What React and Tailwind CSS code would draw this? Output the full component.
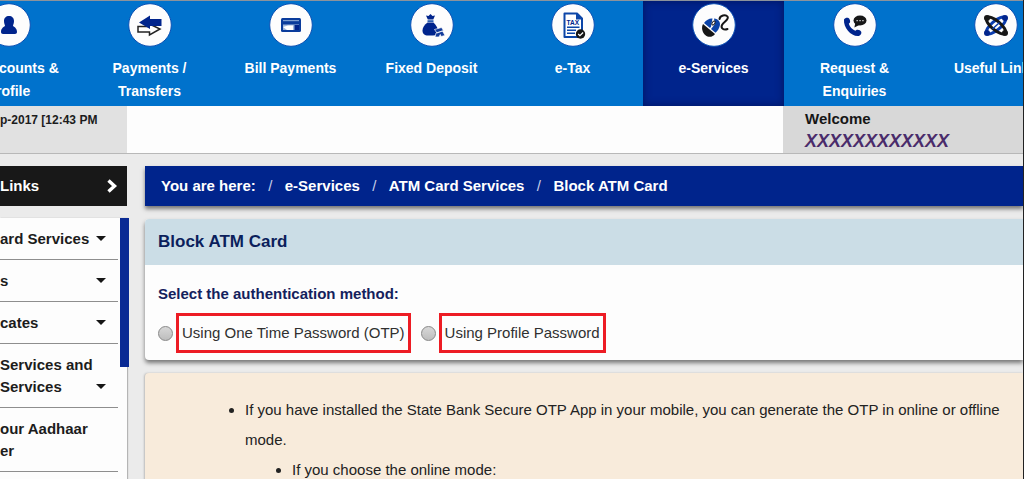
import React from "react";

const BLUE = "#00248c";
const DARK = "#161616";

function Badge({ children }) {
  return (
    <svg viewBox="0 0 44 44" className="h-11 w-11" aria-hidden="true">
      <circle cx="22" cy="22" r="21.300" fill="#fdfdfd" stroke="#0b50b4" strokeWidth="1" />
      {children}
    </svg>
  );
}

const PersonIcon = () => (
  <Badge>
    <path
      fill={BLUE}
      d="M22 13c3 0 5 2 5 5 0 2-.7 3.600-1 4.700.4 1 4 1.900 4 6.300 0 1.200-.8 2-2 2H16c-1.200 0-2-.8-2-2 0-4.400 3.600-5.300 4-6.300-.3-1.100-1-2.700-1-4.700 0-3 2-5 5-5z"
    />
  </Badge>
);

const TransferIcon = () => (
  <Badge>
    <path fill="#fff" stroke="#222" strokeWidth="1.500" d="M10 23.500h10.500V20.500L32 26l-10.500 6v-3H10z" />
    <path fill={BLUE} d="M11 19.500 22 12.500v3.500h11.500v7H22v3z" />
  </Badge>
);

const CardIcon = () => (
  <Badge>
    <rect x="12" y="15" width="20" height="14" rx="1.500" fill="#0a3c9c" />
    <rect x="14" y="17" width="16" height="1.200" fill="#7f9fd0" />
    <rect x="14" y="21.500" width="16" height="5.500" fill="#9db6dc" />
    <path fill="#fff" d="M14 24l5-1.500h5V27h-6z" />
    <rect x="25.500" y="22" width="4.500" height="5" fill={BLUE} />
  </Badge>
);

const BagIcon = () => (
  <Badge>
    <path fill={BLUE} d="M16 12.500l2.500.6 2-2.100 2 2.100 2.500-.6-1.700 4h-5.500z" />
    <path fill="#2c5db0" d="M17.500 17.200h6v1.800h-6z" />
    <path fill={BLUE} d="M17.500 19.500h6c3 3 4.500 6 4.500 8.500 0 3-2 4.500-5 4.500h-5c-3.500 0-5.500-1.500-5.500-5 0-3 2-6 5-8z" />
    <path fill="#123b9b" stroke="#fff" strokeWidth=".7" d="M24.500 26.500l7-2 2 3-6.500 2.500zM26 30l6.500-2 2.500 4.500-4 1-.7-2-1.300 2.500H25z" />
  </Badge>
);

const TaxIcon = () => (
  <Badge>
    <path fill="#fff" stroke="#0c46a8" strokeWidth="2" strokeLinejoin="round" d="M13.500 10.500H26l5 5V34H13.500z" />
    <path fill="#0c46a8" d="M25 10l6.500 6.500H25z" />
    <text x="15.500" y="21.500" fontSize="6.500" fontWeight="bold" fill={BLUE} fontFamily="Liberation Sans, sans-serif">
      TAX
    </text>
    <path stroke="#0c46a8" strokeWidth="1.500" d="M16 24.200h12.500M16 27.200h9M16 30.200h8" />
    <circle cx="29.500" cy="31" r="4.700" fill={DARK} />
    <path fill="none" stroke="#fff" strokeWidth="1.200" d="M27.200 31l1.700 1.700 3.200-3.200" />
  </Badge>
);

const MouseIcon = () => (
  <Badge>
    <path fill={DARK} d="M11 21l12 10c-2.200 3.200-6.500 3.800-9.500 1.300-3.200-2.700-4.500-7.500-2.500-11.300z" />
    <path fill="#0b43a8" d="M12 20c2.500-3.600 6-5 8.500-4.500l-1.500 8.200-1 1.300zM22 15.500c4.500.5 6.800 3.800 5.800 7.300-.7 3-2.200 5.200-4.300 7L19 26l4-5z" />
    <ellipse cx="21.500" cy="20" rx="1.300" ry="2.200" fill="#fff" stroke={DARK} strokeWidth="1" transform="rotate(35 21.500 20)" />
    <path
      fill="none"
      stroke={DARK}
      strokeWidth="2"
      strokeLinecap="round"
      d="M27.500 16c.5-3.500 6-5 8-2.500 2 2.800-3.500 5-5.500 8.500-1.500 3 1.500 5.500 5.500 4"
    />
  </Badge>
);

const PhoneIcon = () => (
  <Badge>
    <path
      fill={BLUE}
      d="M11 16.500c1-1.700 3-2.300 4.500-1.500 1.200.8 2 3 1.500 4.500l-1.200 1.300c1 3.200 3.400 5.700 6.500 7l1.500-1c1.600-.5 3.800.6 4.400 2 .7 1.600-.6 3.700-2.400 4.200-7.300 1-15.600-8.200-14.800-16.500z"
    />
    <ellipse cx="27" cy="17.500" rx="6.500" ry="5" fill={DARK} />
    <path fill={DARK} d="M22.500 19.500l-1.200 5 5-2.500z" />
    <path fill="#ddd" d="M23.500 17h1.300v1.300h-1.300zM26.400 17h1.300v1.300h-1.300zM29.300 17h1.300v1.300h-1.300z" />
  </Badge>
);

const LinksIcon = () => (
  <Badge>
    <g fill="none" strokeLinecap="round">
      <ellipse cx="22" cy="22.500" rx="12" ry="4.500" stroke="#0a3cae" strokeWidth="3" transform="rotate(-40 22 22.500)" />
      <ellipse cx="22" cy="22.500" rx="12" ry="4.500" stroke={DARK} strokeWidth="3" transform="rotate(40 22 22.500)" />
      <path d="M19 25.500l6-5.500" stroke="#0a3cae" strokeWidth="1.500" />
    </g>
    <g fill={BLUE}>
      <circle cx="31" cy="15" r="3" />
      <circle cx="13" cy="30" r="3" />
    </g>
    <g fill={DARK}>
      <circle cx="13" cy="15" r="3" />
      <circle cx="31" cy="30" r="3" />
    </g>
  </Badge>
);

const navItems = [
  { lines: ["My Accounts &", "Profile"], Icon: PersonIcon },
  { lines: ["Payments /", "Transfers"], Icon: TransferIcon },
  { lines: ["Bill Payments"], Icon: CardIcon },
  { lines: ["Fixed Deposit"], Icon: BagIcon },
  { lines: ["e-Tax"], Icon: TaxIcon },
  { lines: ["e-Services"], Icon: MouseIcon, active: true },
  { lines: ["Request &", "Enquiries"], Icon: PhoneIcon },
  { lines: ["Useful Links"], Icon: LinksIcon },
];

const menuItems = [
  { lines: ["ard Services"], arrow: true },
  { lines: ["s"], arrow: true },
  { lines: ["cates"], arrow: true },
  { lines: ["Services and", "Services"], arrow: true },
  { lines: ["our Aadhaar", "er"], arrow: false },
];

const crumbs = ["e-Services", "ATM Card Services", "Block ATM Card"];

function TopNav() {
  return (
    <nav className="overflow-hidden border-t border-[#8c939c] bg-[#0072cc]">
      <ul className="-ml-[62px] flex h-[105px]">
        {navItems.map(({ lines, Icon, active }) => (
          <li
            key={lines[0]}
            className={
              active
                ? "w-[141px] shrink-0 bg-[#00248c] shadow-[inset_0_0_8px_#001560]"
                : "w-[141px] shrink-0"
            }
          >
            <a
              href="#"
              className="flex flex-col items-center pt-[2px] text-center text-[14px] leading-[23px] font-bold text-white"
            >
              <Icon />
              <span className="mt-[10px]">
                {lines.map((line) => (
                  <span key={line} className="block">
                    {line}
                  </span>
                ))}
              </span>
            </a>
          </li>
        ))}
      </ul>
    </nav>
  );
}

function InfoBar() {
  return (
    <div className="flex h-12 border-b border-[#b8b8b8] bg-[#fdfdfd]">
      <div className="w-[127px] shrink-0 overflow-hidden bg-[#e1e1e1] pt-[6px] text-[12px] leading-4 font-bold whitespace-nowrap text-[#1c1c1c]">
        <p>p-2017 [12:43 PM</p>
      </div>
      <div className="flex-1" />
      <div className="w-60 shrink-0 bg-[#d8d8d8] pt-[3px] pl-[22px]">
        <p className="text-[15px] leading-5 font-bold text-[#161616]">Welcome</p>
        <p className="text-[18px] leading-6 font-bold text-[#4a2c6b] italic">XXXXXXXXXXXX</p>
      </div>
    </div>
  );
}

function Sidebar() {
  return (
    <aside className="flex w-[127px] shrink-0 flex-col">
      <button
        type="button"
        className="flex h-10 items-center justify-between bg-[#181818] pr-[9px] text-[15px] font-bold text-white"
      >
        Links
        <svg viewBox="0 0 12 14" className="h-[14px] w-3" aria-hidden="true">
          <path d="M2.500 1.500L8.500 7l-6 5.500" fill="none" stroke="#fff" strokeWidth="3.400" />
        </svg>
      </button>
      <div className="relative mt-3 flex-1 bg-[#fdfdfd] shadow-[1px_0_1px_#b5b5b5]">
        <div className="absolute top-0 -right-[2px] h-[149px] w-[9px] bg-[#0a2a94]" />
        <ul className="mr-[9px]">
          {menuItems.map(({ lines, arrow }) => (
            <li key={lines[0]} className="border-b border-[#8e8e8e]">
              <a
                href="#"
                className="flex items-end justify-between pt-[10px] pr-3 pb-[9px] text-[15px] leading-[22px] font-bold whitespace-nowrap text-[#1c1c1c]"
              >
                <span>
                  {lines.map((line) => (
                    <span key={line} className="block">
                      {line}
                    </span>
                  ))}
                </span>
                {arrow && (
                  <svg viewBox="0 0 10 22" className="h-[22px] w-[10px] shrink-0" aria-hidden="true">
                    <path d="M0 8h10L5 13z" fill="#161616" />
                  </svg>
                )}
              </a>
            </li>
          ))}
        </ul>
      </div>
    </aside>
  );
}

function AuthOption({ id, children }) {
  return (
    <div className="flex items-center gap-[3px]">
      <input
        id={id}
        type="radio"
        name="auth"
        className="h-[15px] w-[15px] shrink-0 appearance-none rounded-full border border-[#888] bg-linear-to-b from-[#d8d8d8] to-[#bdbdbd] checked:to-[#555]"
      />
      <label
        htmlFor={id}
        className="flex h-10 items-center border-[3px] border-[#ed1c24] px-[3px] text-[15px] whitespace-nowrap text-[#303030]"
      >
        {children}
      </label>
    </div>
  );
}

function Main() {
  return (
    <main className="flex min-w-0 flex-1 flex-col">
      <nav
        aria-label="Breadcrumb"
        className="flex h-10 shrink-0 items-center bg-[#00248c] pl-4 text-[15px] font-bold whitespace-nowrap text-white shadow-[0_3px_4px_#777]"
      >
        <span>You are here:</span>
        {crumbs.map((crumb) => (
          <React.Fragment key={crumb}>
            <span className="w-[29px] text-center font-normal text-[#c5cee8]">/</span>
            <a href="#">{crumb}</a>
          </React.Fragment>
        ))}
      </nav>

      <section className="mt-[13px] shrink-0 rounded-l-sm bg-[#fdfdfd] shadow-[0_3px_4px_#777]">
        <h1 className="flex h-[46px] items-center rounded-tl-sm bg-[#cbdde6] pl-[13px] text-[17px] font-bold text-[#0b1f5c]">
          Block ATM Card
        </h1>
        <fieldset className="px-[13px] pt-[19px] pb-[7px]">
          <legend className="float-left w-full text-[15px] leading-5 font-bold text-[#14215c]">
            Select the authentication method:
          </legend>
          <div className="clear-both flex gap-[10px] pt-[9px]">
            <AuthOption id="otp">Using One Time Password (OTP)</AuthOption>
            <AuthOption id="profile">Using Profile Password</AuthOption>
          </div>
        </fieldset>
      </section>

      <section className="mt-[13px] flex-1 rounded-tl-sm bg-[#f8ebdb] pt-[22px] pr-4 pl-[100px] text-[15px] leading-[30px] text-[#222] shadow-[-1px_0_2px_#bbb]">
        <ul className="list-disc">
          <li>
            If you have installed the State Bank Secure OTP App in your mobile, you can generate the OTP in online or
            offline mode.
            <ul className="list-disc pl-[47px]">
              <li>If you choose the online mode:</li>
            </ul>
          </li>
        </ul>
      </section>
    </main>
  );
}

export default function App() {
  return (
    <div className="flex h-screen flex-col overflow-hidden border-r border-[#222] bg-[#ebebeb] font-['Liberation_Sans',Arial,sans-serif]">
      <TopNav />
      <InfoBar />
      <div className="flex min-h-0 flex-1 gap-[18px] pt-3">
        <Sidebar />
        <Main />
      </div>
    </div>
  );
}
